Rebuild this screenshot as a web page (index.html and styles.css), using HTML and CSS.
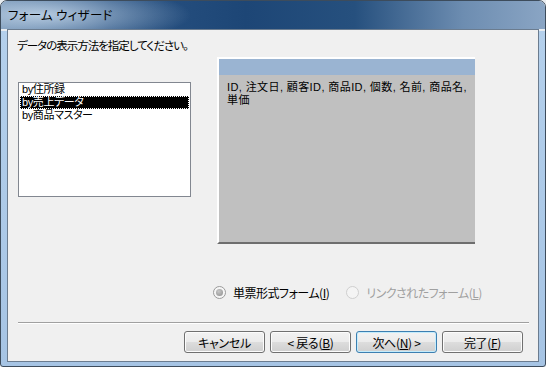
FILE: index.html
```html
<!DOCTYPE html>
<html lang="ja">
<head>
    <meta charset="UTF-8">
    <meta name="viewport" content="width=device-width, initial-scale=1.0">
    <title>フォーム ウィザード</title>
    <link rel="stylesheet" href="styles.css">
</head>
<body>
<div class="window">
    <div class="titlebar"><span class="title">フォーム ウィザード</span></div>
    <div class="client">
        <p class="prompt">データの表示方法を指定してください。</p>
        <div class="main">
            <ul class="listbox">
                <li>by住所録</li>
                <li class="selected"><span>by売上データ</span></li>
                <li>by商品マスター</li>
            </ul>
            <div class="preview">
                <div class="preview-head"></div>
                <p class="preview-fields">ID, 注文日, 顧客ID, 商品ID, 個数, 名前, 商品名,<br>単価</p>
            </div>
        </div>
        <div class="options">
            <label class="radio checked"><span class="dot"></span><span>単票形式フォーム(<u>I</u>)</span></label>
            <label class="radio disabled"><span class="dot"></span><span>リンクされたフォーム(<u>L</u>)</span></label>
        </div>
        <hr class="separator">
        <div class="buttons">
            <button>キャンセル</button>
            <button>&lt; 戻る(<u>B</u>)</button>
            <button class="default">次へ(<u>N</u>) &gt;</button>
            <button>完了(<u>F</u>)</button>
        </div>
    </div>
</div>
</body>
</html>
```

FILE: styles.css
```css
/* page */
body {
    margin: 0;
    background: #e8ecf0;
    font-family: "Noto Sans CJK JP", "Liberation Sans", sans-serif;
    font-size: 12px;
    color: #000;
}
/* window frame */
.window {
    width: 546px;
    height: 367px;
    box-sizing: border-box;
    border: 1px solid #3d4c5c;
    border-radius: 7px 7px 3px 3px;
    background:
        linear-gradient(to bottom, rgba(255,255,255,0) 0, rgba(255,255,255,0) 30px, #b4d0ec 30px, #a6c4e4 100%);
    display: flex;
    flex-direction: column;
    overflow: hidden;
}
.titlebar {
    height: 28px;
    padding-left: 7px;
    display: flex;
    align-items: center;
    background:
        radial-gradient(ellipse 150px 30px at 40px 14px, rgba(200,218,236,0.85), rgba(200,218,236,0) 100%),
        linear-gradient(to right, #5f82a8 0, #2a5383 20%, #1d4676 45%, #26507e 65%, #6d8db1 85%, #8aa5c4 100%);
}
.title {
    font-size: 12.5px;
    line-height: 14px;
    color: #000;
    font-feature-settings: "palt";
    letter-spacing: 0.3px;
}
/* client area */
.client {
    margin: 0 6px 0 6px;
    height: 333px;
    box-sizing: border-box;
    border: 1px solid #6b7c8f;
    background: #f0f0f0;
    padding: 0 9px 0 10px;
}
.prompt {
    margin: 9px 0 0 -1px;
    font-size: 11.5px;
    line-height: 13px;
    letter-spacing: -1px;
    font-feature-settings: "palt";
}
.main {
    display: flex;
    align-items: flex-start;
    margin-top: 5px;
}
.listbox {
    list-style: none;
    margin: 25px 0 0 0;
    padding: 0 1px;
    width: 173px;
    height: 115px;
    box-sizing: border-box;
    border: 1px solid #828790;
    background: #fff;
    font-family: "Liberation Sans", "Noto Sans CJK JP", sans-serif;
}
.listbox li {
    height: 13px;
    font-size: 11px;
    line-height: 13px;
    padding-left: 2px;
    letter-spacing: -0.4px;
    font-feature-settings: "palt";
    white-space: nowrap;
}
.listbox li.selected {
    background: #000;
    color: #fff;
    outline: 1px dotted #fff;
    outline-offset: -1px;
}
.preview {
    margin-left: 26px;
    width: 258px;
    height: 187px;
    box-sizing: border-box;
    border-top: 2px solid #fff;
    border-left: 2px solid #fff;
    border-bottom: 2px solid #6e6e6e;
    background: #c0c0c0;
}
.preview-head {
    height: 16px;
    background: #9ab4d2;
}
.preview-fields {
    margin: 6px 0 0 8px;
    font-family: "Liberation Sans", "Noto Sans CJK JP", sans-serif;
    font-size: 11px;
    line-height: 12.7px;
    letter-spacing: 0.4px;
    font-feature-settings: "palt";
    white-space: nowrap;
}
/* radio buttons */
.options {
    display: flex;
    gap: 17px;
    margin-top: 42px;
    padding-left: 195px;
    height: 13px;
}
.radio {
    display: flex;
    align-items: center;
    gap: 7px;
    line-height: 13px;
    letter-spacing: -0.5px;
    font-feature-settings: "palt";
}
.dot {
    width: 11px;
    height: 11px;
    border-radius: 50%;
    border: 1px solid #9a9a9a;
    background: radial-gradient(circle, #eaeaea 0, #f8f8f8 70%);
    position: relative;
}
.checked .dot::after {
    content: "";
    position: absolute;
    left: 2px;
    top: 2px;
    width: 7px;
    height: 7px;
    border-radius: 50%;
    background: radial-gradient(circle at 40% 35%, #c8c8c8, #8c8c8c);
}
.disabled {
    color: #a0a0a0;
}
.disabled .dot {
    border-color: #cfcfcf;
    background: #f4f4f4;
}
/* separator */
.separator {
    margin: 23px 0 0 0;
    border: 0;
    border-top: 1px solid #a0a0a0;
    border-bottom: 1px solid #fff;
    height: 0;
}
/* buttons */
.buttons {
    display: flex;
    justify-content: flex-end;
    gap: 5px;
    margin-top: 7px;
    padding-right: 6px;
}
.buttons button {
    width: 81px;
    height: 22px;
    padding: 0;
    font-family: inherit;
    font-size: 12px;
    letter-spacing: -0.3px;
    font-feature-settings: "palt";
    color: #000;
    border: 1px solid #707070;
    border-radius: 3px;
    box-shadow: inset 0 0 0 1px #fcfcfc;
    background: linear-gradient(to bottom, #f2f2f2 0, #ebebeb 50%, #dddddd 50%, #cfcfcf 100%);
}
.buttons button.default {
    border-color: #3c7fb1;
    box-shadow: inset 0 0 0 1px #c4ecfc;
}
```
